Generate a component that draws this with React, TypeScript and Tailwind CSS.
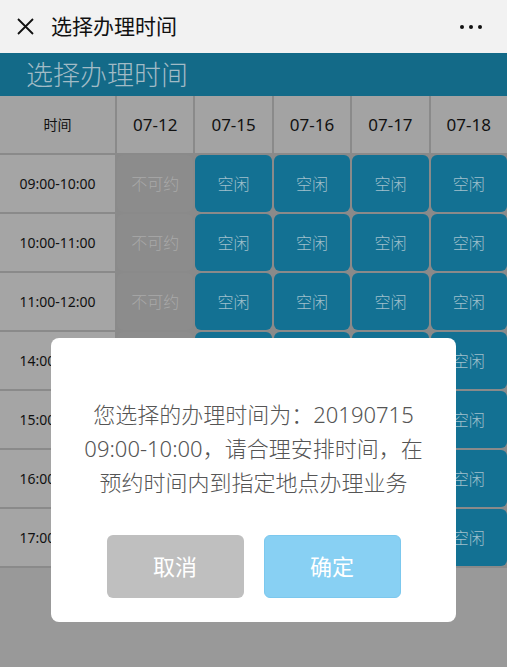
const dates = ['07-12', '07-15', '07-16', '07-17', '07-18']
const slots = [
  '09:00-10:00',
  '10:00-11:00',
  '11:00-12:00',
  '14:00-15:00',
  '15:00-16:00',
  '16:00-17:00',
  '17:00-18:00',
]

export default function App() {
  return (
    <div
      className="relative w-[507px] h-[667px] overflow-hidden bg-[#999999]"
      style={{ fontFamily: '"Noto Sans", "Noto Sans CJK SC", sans-serif' }}
    >
      {/* wechat nav */}
      <div className="h-[53px] bg-[#f2f2f2] flex items-center pl-[17px] pr-[25px]">
        <svg width="17" height="17" viewBox="0 0 17 17" className="text-[#111]">
          <path d="M1 1L16 16M16 1L1 16" stroke="currentColor" strokeWidth="1.8" fill="none" />
        </svg>
        <span className="ml-[17px] text-[21px] text-[#111] leading-none">选择办理时间</span>
        <div className="ml-auto flex gap-[5px]">
          <span className="w-[4px] h-[4px] rounded-full bg-[#111]" />
          <span className="w-[4px] h-[4px] rounded-full bg-[#111]" />
          <span className="w-[4px] h-[4px] rounded-full bg-[#111]" />
        </div>
      </div>

      {/* page header */}
      <div className="h-[43px] bg-[#136a88] flex items-center pl-[26px]">
        <span className="text-[27px] leading-none font-light text-[#a1bbc6]">选择办理时间</span>
      </div>

      {/* schedule table */}
      <div className="grid grid-cols-[115px_repeat(5,1fr)] gap-[2px] bg-[#8a8a8a] pb-[2px]">
        <div className="h-[57px] bg-[#a3a3a3] flex items-center justify-center text-[14px] text-[#111]">时间</div>
        {dates.map(d => (
          <div key={d} className="h-[57px] bg-[#a3a3a3] flex items-center justify-center text-[17px] text-[#111]">
            {d}
          </div>
        ))}
        {slots.map(s => (
          <div key={s} className="contents">
            <div className="h-[57px] bg-[#a5a5a5] flex items-center justify-center text-[14px] text-[#111]">{s}</div>
            {dates.map((d, i) =>
              i === 0 ? (
                <div key={d} className="h-[57px] rounded-[6px] bg-[#8c8c8c] flex items-center justify-center text-[16px] font-light text-[#a9a9a9]">
                  不可约
                </div>
              ) : (
                <div key={d} className="h-[57px] rounded-[6px] bg-[#137193] flex items-center justify-center text-[16px] font-light text-[#a0c0cc]">
                  空闲
                </div>
              )
            )}
          </div>
        ))}
      </div>

      {/* confirm dialog */}
      <div className="absolute left-[51px] top-[338px] w-[405px] h-[284px] bg-white rounded-[8px] flex flex-col items-center">
        <div className="mt-[59px] text-[22px] leading-[34px] font-light text-[#555] text-center whitespace-nowrap">
          <p>您选择的办理时间为：20190715</p>
          <p>09:00-10:00，请合理安排时间，在</p>
          <p>预约时间内到指定地点办理业务</p>
        </div>
        <div className="mt-[36px] flex gap-[20px]">
          <button className="w-[137px] h-[63px] rounded-[6px] bg-[#bfbfbf] text-white text-[22px]">取消</button>
          <button className="w-[137px] h-[63px] rounded-[6px] bg-[#88d0f3] border border-[#7cc8ee] text-white text-[22px]">确定</button>
        </div>
      </div>
    </div>
  )
}
